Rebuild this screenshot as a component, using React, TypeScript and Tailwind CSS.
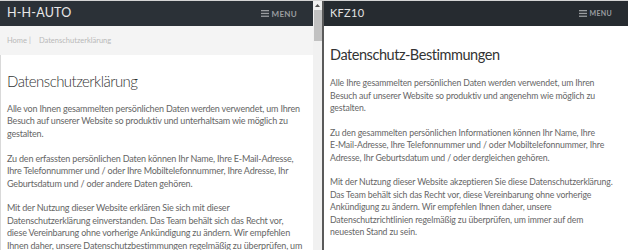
import type React from "react";

const MenuButton: React.FC<{ small?: boolean }> = ({ small }) => (
    <div className={`flex items-center gap-[3px] text-[#9a9da0] font-bold ${small ? "text-[7px]" : "text-[8px]"}`}>
        <svg width="8" height="7" viewBox="0 0 8 7">
            <rect x="0" y="0" width="8" height="1.3" fill="#9a9da0" />
            <rect x="0" y="2.8" width="8" height="1.3" fill="#9a9da0" />
            <rect x="0" y="5.6" width="8" height="1.3" fill="#9a9da0" />
        </svg>
        <span className="tracking-[0.3px]">MENU</span>
    </div>
);

const App: React.FC = () => {
    return (
        <div className="w-[628px] h-[250px] overflow-hidden flex flex-row bg-[#d4d4d4] pt-px" style={{ fontFamily: "Lato, 'Open Sans', sans-serif" }}>
            {/* left window */}
            <div className="w-[313px] h-full flex flex-col bg-white">
                <header className="shrink-0 h-[25px] bg-[#2b3137] flex flex-row justify-between items-center pl-[7px] pr-[16px]">
                    <span className="text-[#e8e8e8] text-[12.5px] tracking-[0.2px]">H-H-AUTO</span>
                    <MenuButton />
                </header>
                <div className="shrink-0 h-[29px] bg-[#f4f4f4] flex items-center px-[7px] text-[7.5px] text-[#b9b9b9]">
                    <span>Home</span>
                    <span className="ml-[2px] mr-[8px]">|</span>
                    <span>Datenschutzerklärung</span>
                </div>
                <div className="flex-1 border-l border-[#d9d9d9] pl-[6px] pr-[6px] pt-[16px]">
                    <h1 className="text-[15px] font-light tracking-[-0.55px] text-[#333] leading-[20px] mb-[12px]">Datenschutzerklärung</h1>
                    <div className="text-[9px] tracking-[-0.18px] leading-[12.4px] text-[#666] flex flex-col gap-[12.5px]">
                        <p>Alle von Ihnen gesammelten persönlichen Daten werden verwendet, um Ihren Besuch auf unserer Website so produktiv und unterhaltsam wie möglich zu gestalten.</p>
                        <p>Zu den erfassten persönlichen Daten können Ihr Name, Ihre E-Mail-Adresse, Ihre Telefonnummer und / oder Ihre Mobiltelefonnummer, Ihre Adresse, Ihr Geburtsdatum und / oder andere Daten gehören.</p>
                        <p>Mit der Nutzung dieser Website erklären Sie sich mit dieser Datenschutzerklärung einverstanden. Das Team behält sich das Recht vor,<br />diese Vereinbarung ohne vorherige Ankündigung zu ändern. Wir empfehlen<br />Ihnen daher, unsere Datenschutzbestimmungen regelmäßig zu überprüfen, um immer auf dem neuesten Stand zu sein.</p>
                    </div>
                </div>
            </div>
            {/* scrollbar */}
            <div className="w-[9px] h-full bg-[#f1f1f1] flex flex-col items-center">
                <div className="h-[9px] flex items-center justify-center">
                    <svg width="5" height="3" viewBox="0 0 5 3"><path d="M0 3 L2.5 0 L5 3 Z" fill="#505050" /></svg>
                </div>
                <div className="w-[8px] h-[31px] bg-[#c1c1c1]" />
            </div>
            <div className="w-[2px] h-full bg-[#5a5a5a]" />
            {/* right window */}
            <div className="flex-1 h-full flex flex-col bg-white">
                <header className="shrink-0 h-[25px] bg-[#262b30] flex flex-row justify-between items-center pl-[6px] pr-[16px]">
                    <span className="text-[#e4e4e4] text-[11px] tracking-[0.3px]">KFZ10</span>
                    <MenuButton small />
                </header>
                <div className="pl-[6px] pr-[5px] pt-[20px]">
                    <h1 className="text-[14.5px] tracking-[-0.45px] text-[#333] leading-[18px] mb-[13px]">Datenschutz-Bestimmungen</h1>
                    <div className="text-[8.7px] tracking-[-0.12px] leading-[12.5px] text-[#666] flex flex-col gap-[12px]">
                        <p>Alle Ihre gesammelten persönlichen Daten werden verwendet, um Ihren Besuch auf unserer Website so produktiv und angenehm wie möglich zu gestalten.</p>
                        <p>Zu den gesammelten persönlichen Informationen können Ihr Name, Ihre <span className="whitespace-nowrap">E-Mail-Adresse,</span> Ihre Telefonnummer und / oder Mobiltelefonnummer, Ihre Adresse, Ihr Geburtsdatum und / oder dergleichen gehören.</p>
                        <p>Mit der Nutzung dieser Website akzeptieren Sie diese Datenschutzerklärung. Das Team behält sich das Recht vor, diese Vereinbarung ohne vorherige Ankündigung zu ändern. Wir empfehlen Ihnen daher, unsere Datenschutzrichtlinien regelmäßig zu überprüfen, um immer auf dem<br />neuesten Stand zu sein.</p>
                    </div>
                </div>
            </div>
        </div>
    );
};

export default App;
